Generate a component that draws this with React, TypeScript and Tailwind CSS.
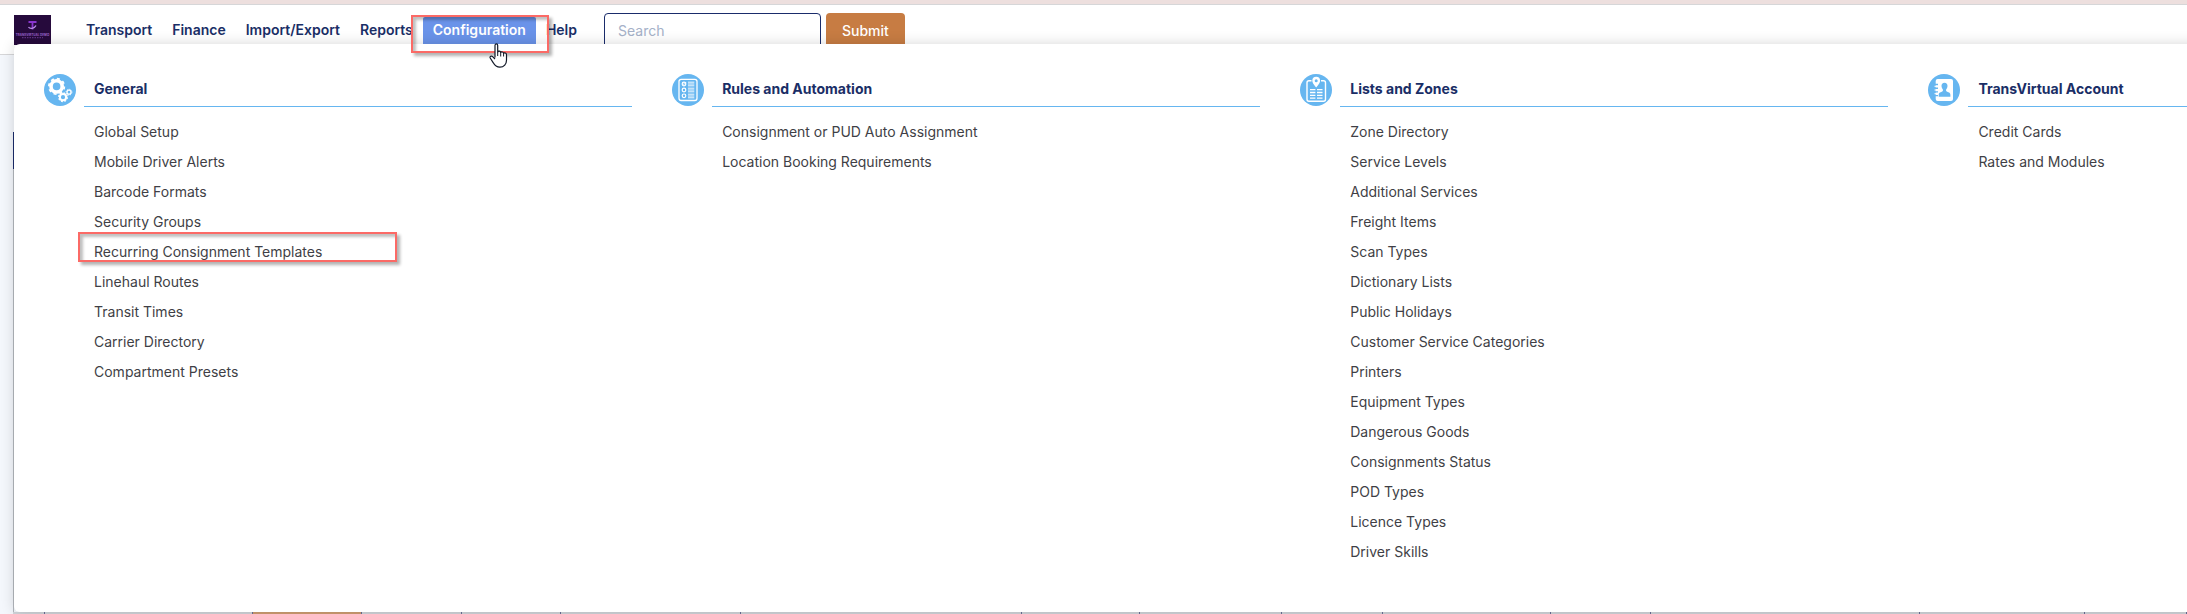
import type { ReactNode } from "react";
import clsx from "clsx";

type MenuSection = {
  title: string;
  icon: ReactNode;
  items: string[];
};

const NAV_ITEMS = ["Transport", "Finance", "Import/Export", "Reports", "Configuration", "Help"];

// relative widths of the grid header cells under the menu
const GRID_COLUMNS = [31, 209, 108, 100, 99, 180, 281, 118, 142, 101, 168, 100, 269, 165, 102];

function GearsIcon() {
  return (
    <svg viewBox="0 0 32 32" className="size-8" aria-hidden="true" fill="none" stroke="#fff">
      <circle cx="16" cy="16" r="16" fill="#66b6f0" stroke="none" />
      <circle cx="12.6" cy="12.4" r="5.6" strokeWidth="3.6" />
      <circle cx="12.6" cy="12.4" r="7.7" strokeWidth="1.8" strokeDasharray="3 3.05" />
      <circle cx="19" cy="23.2" r="3.1" strokeWidth="2" />
      <circle cx="19" cy="23.2" r="4.4" strokeWidth="1.2" strokeDasharray="1.8 1.66" />
      <circle cx="25" cy="18.2" r="2" strokeWidth="1.3" />
      <circle cx="25" cy="18.2" r="2.9" strokeWidth="0.9" strokeDasharray="1.2 1.08" />
    </svg>
  );
}

function ChecklistIcon() {
  return (
    <svg viewBox="0 0 32 32" className="size-8" aria-hidden="true" fill="none" stroke="#fff">
      <circle cx="16" cy="16" r="16" fill="#66b6f0" stroke="none" />
      <rect x="7" y="5.3" width="18" height="21.2" rx="2.2" strokeWidth="1.3" />
      <g strokeWidth="1.2">
        <circle cx="12" cy="10" r="1.8" />
        <circle cx="12" cy="16" r="1.8" />
        <circle cx="12" cy="21.8" r="1.8" />
        <path
          d="M11.2 9.8l.8.8 2-2.4M16 8.2h6.3M16 10h6.3M16 11.8h6.3M16 14.2h6.3M16 16h6.3M16 17.8h6.3M16 20.2h6.3M16 22h6.3M16 23.8h6.3"
          strokeWidth="0.9"
        />
      </g>
    </svg>
  );
}

function ZonesIcon() {
  return (
    <svg viewBox="0 0 32 32" className="size-8" aria-hidden="true" fill="none" stroke="#fff">
      <circle cx="16" cy="16" r="16" fill="#66b6f0" stroke="none" />
      <path d="M11.5 6.7H9a2 2 0 0 0-2 2v16.6a2 2 0 0 0 2 2h14.5a2 2 0 0 0 2-2V8.7a2 2 0 0 0-2-2H21" strokeWidth="1.4" />
      <path
        d="M16.2 2.8a3.9 3.9 0 0 0-3.9 3.9c0 2.6 3.9 6.8 3.9 6.8s3.9-4.2 3.9-6.8a3.9 3.9 0 0 0-3.9-3.900zm0 2.400a1.500 1.500 0 1 1 0 3 1.500 1.500 0 0 1 0-3z"
        fill="#fff"
        fillRule="evenodd"
        stroke="none"
      />
      <path
        d="M10 15.7h5.4M17 15.7h5.5M10 18.5h5.4M17 18.5h5.5M10 21.3h5.4M17 21.3h5.5M10 24.1h5.4M17 24.1h5.5"
        strokeWidth="1.3"
      />
    </svg>
  );
}

function AccountIcon() {
  return (
    <svg viewBox="0 0 32 32" className="size-8" aria-hidden="true">
      <circle cx="16" cy="16" r="16" fill="#66b6f0" />
      <rect x="7.7" y="5" width="17.3" height="22" rx="2" fill="#fff" />
      <path d="M6.5 10.5h3.5M6.5 14.2h3.5M6.5 17.9h3.5M6.5 21.6h3.5" stroke="#66b6f0" strokeWidth="1.4" />
      <path d="M6.5 12.3h3M6.5 16h3M6.5 19.7h3" stroke="#fff" strokeWidth="1" />
      <path
        d="M16.5 8.800c-2 0-3.100 1.400-3 3.200.1 1.500.7 2.600 1.400 3.400v1.600c-.5 1-4 1-4.200 3.700v2h11.700v-2c-.2-2.700-3.800-2.700-4.300-3.700v-1.600c.8-.8 1.300-1.900 1.400-3.400.1-1.800-1-3.200-3-3.200z"
        fill="#66b6f0"
      />
    </svg>
  );
}

function Logo() {
  return (
    <svg viewBox="0 0 37 30" className="h-[30px] w-[37px]" role="img" aria-label="TransVirtual Demo">
      <rect width="37" height="30" fill="#260a3c" />
      <path d="M14.5 7h8M18.5 7v7.5" stroke="#8a35d0" strokeWidth="1.8" fill="none" />
      <path d="M14.5 12c1.500 2.500 6 1.500 7.500-1.500" stroke="#b98be8" strokeWidth="1.3" fill="none" />
      <text x="18.5" y="20.5" textAnchor="middle" fontFamily="Inter, sans-serif" fontSize="3" fontWeight="700" fill="#9a62c9">
        TRANSVIRTUAL DEMO
      </text>
      <path d="M8 22.7h21" stroke="#6d3d96" strokeWidth="1" strokeDasharray="1.5 1" />
    </svg>
  );
}

const SECTIONS: MenuSection[] = [
  {
    title: "General",
    icon: <GearsIcon />,
    items: [
      "Global Setup",
      "Mobile Driver Alerts",
      "Barcode Formats",
      "Security Groups",
      "Recurring Consignment Templates",
      "Linehaul Routes",
      "Transit Times",
      "Carrier Directory",
      "Compartment Presets",
    ],
  },
  {
    title: "Rules and Automation",
    icon: <ChecklistIcon />,
    items: ["Consignment or PUD Auto Assignment", "Location Booking Requirements"],
  },
  {
    title: "Lists and Zones",
    icon: <ZonesIcon />,
    items: [
      "Zone Directory",
      "Service Levels",
      "Additional Services",
      "Freight Items",
      "Scan Types",
      "Dictionary Lists",
      "Public Holidays",
      "Customer Service Categories",
      "Printers",
      "Equipment Types",
      "Dangerous Goods",
      "Consignments Status",
      "POD Types",
      "Licence Types",
      "Driver Skills",
    ],
  },
  {
    title: "TransVirtual Account",
    icon: <AccountIcon />,
    items: ["Credit Cards", "Rates and Modules"],
  },
];

function Highlight({ className }: { className: string }) {
  return (
    <span
      aria-hidden="true"
      className={clsx(
        "pointer-events-none absolute z-20 border-2 border-[#fb6a66] shadow-[3px_3px_3px_rgba(0,0,0,0.3),inset_3px_3px_3px_rgba(0,0,0,0.25)]",
        className,
      )}
    />
  );
}

function HandCursor() {
  return (
    <svg
      viewBox="0 0 19 25"
      className="pointer-events-none absolute top-[26px] left-[66px] z-30 h-[25px] w-[19px]"
      aria-hidden="true"
    >
      <path
        d="M6 14.5V2.6C6 .4 8.7.4 8.7 2.6V9c.5-1.3 2.9-1 3 .5.7-1 2.7-.7 2.9.8.8-.8 2.9-.4 2.9 1.5v5.5c0 3.7-2.5 6.9-6.6 6.9-3.3 0-5.2-1.7-6.6-4.4L1.2 15c-.7-1.5 1.2-2.6 2.4-1.4L6 16"
        fill="#fff"
        stroke="#111827"
        strokeWidth="1.2"
        strokeLinejoin="round"
      />
      <path d="M8.7 9v4M11.7 9.5v4M14.6 10.5v3" stroke="#111827" strokeWidth="1" />
    </svg>
  );
}

function Header() {
  return (
    <header className="flex h-[51px] items-start border-y border-[#d6d6d8] bg-white pt-2 pl-3.5">
      <a href="#home" className="mt-0.5">
        <Logo />
      </a>
      <nav className="mt-1 ml-[25px] flex text-[14px] leading-[26px] font-semibold text-[#1a2e66]">
        {NAV_ITEMS.map((item) =>
          item === "Configuration" ? (
            <div key={item} className="relative">
              <a href="#configuration" className="block rounded-xs bg-[#6a93e9] px-2.5 pb-1 text-white">
                {item}
              </a>
              <Highlight className="-top-0.5 -left-3 h-[38px] w-[138px]" />
              <HandCursor />
            </div>
          ) : (
            <a key={item} href={`#${item.toLowerCase()}`} className="block px-2.5">
              {item}
            </a>
          ),
        )}
      </nav>
      <form className="ml-[17px] flex gap-[5px]" onSubmit={(e) => e.preventDefault()}>
        <input
          type="search"
          aria-label="Search"
          placeholder="Search"
          className="h-[35px] w-[217px] rounded-sm border border-[#1a2c6b] bg-white px-[13px] text-[14px] placeholder:text-[#a5b1c8]"
        />
        <button type="submit" className="h-[35px] rounded-sm bg-[#c77c43] px-4 text-[14px] font-medium text-white">
          Submit
        </button>
      </form>
    </header>
  );
}

function Section({ title, icon, items }: MenuSection) {
  return (
    <section className="flex items-start gap-2">
      {icon}
      <div className="min-w-0 flex-1">
        <h2 className="h-[33px] border-b border-[#66b6f0] px-2.5 text-[14px] leading-[30px] font-bold text-[#1a2e66]">
          {title}
        </h2>
        <ul className="mt-2.5 px-2.5 text-[14px] leading-[30px] text-[#3f3f46]">
          {items.map((item) => (
            <li key={item} className="relative">
              <a href="#item">{item}</a>
              {item === "Recurring Consignment Templates" && <Highlight className="-top-[5px] -left-4 h-[30px] w-[319px]" />}
            </li>
          ))}
        </ul>
      </div>
    </section>
  );
}

export default function App() {
  return (
    <div className="relative flex min-h-screen flex-col overflow-hidden bg-[#f4f7fc] font-['Inter',sans-serif]">
      <div className="h-1 bg-[#eddfde]" />
      <Header />
      <main className="flex flex-1 flex-col pl-[13px]">
        <div className="mt-[77px] h-[37px] border-l border-[#1a2c6b]" />
        <div className="flex-1 border-l border-[#b4b8be]" />
        <div className="flex h-0.5 bg-[#d1d5da]">
          {GRID_COLUMNS.map((width, i) => (
            <span
              key={i}
              style={{ flexGrow: width }}
              className={clsx("basis-0 border-r border-[#6b6f98]", i === 2 && "bg-[#cf9d72]")}
            />
          ))}
        </div>
      </main>
      <div className="absolute top-11 left-3.5 z-10 grid w-[115.8%] grid-cols-4 gap-10 rounded-md bg-white px-[30px] pt-[30px] pb-[45px] shadow-[0_0_14px_rgba(0,0,0,0.16)]">
        {SECTIONS.map((section) => (
          <Section key={section.title} {...section} />
        ))}
      </div>
    </div>
  );
}
